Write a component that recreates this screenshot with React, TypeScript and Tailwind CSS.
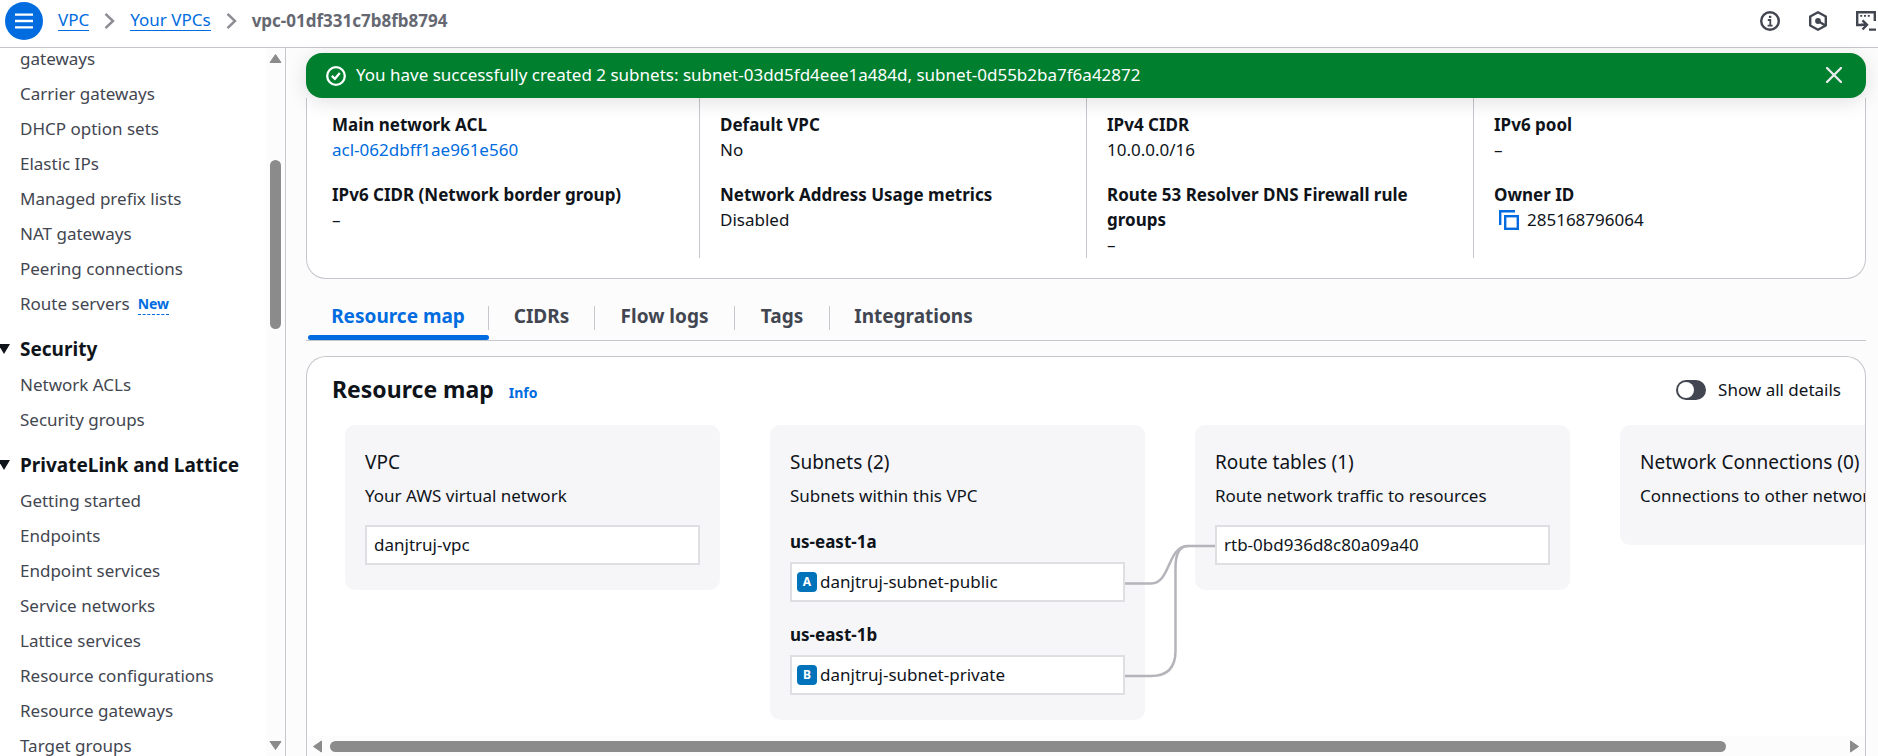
import type { ReactNode } from "react";

const firstLinks = [
  "gateways",
  "Carrier gateways",
  "DHCP option sets",
  "Elastic IPs",
  "Managed prefix lists",
  "NAT gateways",
  "Peering connections",
  "Route servers",
];
const securityLinks = ["Network ACLs", "Security groups"];
const latticeLinks = [
  "Getting started",
  "Endpoints",
  "Endpoint services",
  "Service networks",
  "Lattice services",
  "Resource configurations",
  "Resource gateways",
  "Target groups",
];

function NavLinks({ items }: { items: string[] }) {
  return (
    <ul>
      {items.map((item) => (
        <li key={item} className="flex h-[35px] items-center gap-2 pl-5 text-[#424650]">
          <a href="#nav">{item}</a>
          {item === "Route servers" && (
            <a href="#new" className="mt-0.5 border-b border-dashed border-[#006ce0] text-sm leading-5 font-bold text-[#006ce0]">
              New
            </a>
          )}
        </li>
      ))}
    </ul>
  );
}

function NavHeading({ children }: { children: ReactNode }) {
  return (
    <button type="button" className="flex h-[46px] w-full items-center pt-2.5 text-left text-[19px] font-bold">
      <svg width="20" height="12" viewBox="0 0 20 12" className="shrink-0" aria-hidden="true">
        <path d="M-2 1H10L4 11Z" fill="#0f141a" />
      </svg>
      {children}
    </button>
  );
}

function Chevron() {
  return (
    <svg width="11" height="18" viewBox="0 0 11 18" fill="none" stroke="#8c8c94" strokeWidth="2.5" aria-hidden="true">
      <path d="M1.5 1.8L9 9L1.5 16.2" />
    </svg>
  );
}

function Field({ label, children }: { label: string; children: ReactNode }) {
  return (
    <div>
      <dt className="font-bold">{label}</dt>
      <dd>{children}</dd>
    </div>
  );
}

function Column({ children }: { children: ReactNode }) {
  return <dl className="flex flex-col gap-5 pt-3.5 pb-px">{children}</dl>;
}

const dividedColumn = "-ml-5 border-l border-[#c6c6cd] pl-5";

function Panel({ title, text, children }: { title: string; text: string; children?: ReactNode }) {
  return (
    <section className="w-[375px] shrink-0 rounded-[10px] bg-[#f6f6f9] px-5 py-[25px]">
      <h3 className="text-[19px] leading-[25px]">{title}</h3>
      <p className="mt-2 pb-0.5 whitespace-nowrap">{text}</p>
      {children}
    </section>
  );
}

function Node({ name, badge }: { name: string; badge?: string }) {
  return (
    <div className="flex h-10 items-center gap-[3px] border-2 border-[#dedee3] bg-white px-[5px]">
      {badge ? (
        <span className="flex size-5 items-center justify-center rounded-sm bg-[#0073bb] text-xs font-bold text-white">
          {badge}
        </span>
      ) : null}
      <span className={badge ? "pb-0.5" : "pb-0.5 pl-0.5"}>{name}</span>
    </div>
  );
}

export default function App() {
  return (
    <div className="flex h-screen flex-col overflow-hidden bg-[#fcfcfd] font-['Noto_Sans',sans-serif] text-[17px] leading-[25px] text-[#0f141a]">
      <header className="flex h-12 shrink-0 items-center justify-between border-b border-[#c6c6cd] bg-white pb-[5px]">
        <div className="flex items-center">
          <button type="button" aria-label="Menu" className="ml-[5px] flex size-[38px] items-center justify-center rounded-full bg-[#006ce0]">
            <svg width="18" height="16" viewBox="0 0 18 16" stroke="#fff" strokeWidth="2.4" aria-hidden="true">
              <path d="M0 1.6H18M0 8H18M0 14.4H18" />
            </svg>
          </button>
          <nav aria-label="Breadcrumb" className="ml-[15px] flex items-center gap-[15px] pb-px">
            <a href="#vpc" className="border-b border-[#006ce0] leading-5 text-[#006ce0]">VPC</a>
            <Chevron />
            <a href="#vpcs" className="border-b border-[#006ce0] leading-5 text-[#006ce0]">Your VPCs</a>
            <Chevron />
            <span className="pb-px font-bold text-[#656871]">vpc-01df331c7b8fb8794</span>
          </nav>
        </div>
        <div className="flex items-center gap-7 pr-0.5 text-[#424650]">
          <button type="button" aria-label="Info">
            <svg width="20" height="20" viewBox="0 0 20 20" fill="none" stroke="currentColor" strokeWidth="2.4">
              <circle cx="10" cy="10" r="8.8" />
              <path d="M7.8 9H10.3V14.8M7.6 14.6H12.6" strokeWidth="1.8" />
              <path d="M10.1 4.8V7" />
            </svg>
          </button>
          <button type="button" aria-label="Diagnostics">
            <svg width="20" height="20" viewBox="0 0 20 20" fill="none" stroke="currentColor" strokeWidth="2.4" strokeLinejoin="round">
              <path d="M10 1.3L17.8 5.5V14.5L10 18.7L2.2 14.5V5.5Z" />
              <circle cx="10" cy="10" r="2.9" fill="currentColor" stroke="none" />
              <path d="M10 10L17 14.2" />
            </svg>
          </button>
          <button type="button" aria-label="CloudShell">
            <svg width="20" height="20" viewBox="0 0 20 20" fill="none" stroke="currentColor" strokeWidth="2.4">
              <path d="M6 14H1.2V1.2H18.8V10" />
              <path d="M4.2 4.9H6.2M8 4.9H10M11.8 4.9H13.8" strokeWidth="1.9" />
              <path d="M5 13.8H11M6.5 9.3L11 13.8L6.5 18.3M13 18.6H20" />
            </svg>
          </button>
        </div>
      </header>

      <div className="flex min-h-0 flex-1">
        <aside className="flex w-[286px] shrink-0 border-r border-[#c6c6cd] bg-white">
          <nav aria-label="VPC sections" className="min-w-0 flex-1 overflow-hidden">
            <div className="-mt-[7px]">
              <NavLinks items={firstLinks} />
              <NavHeading>Security</NavHeading>
              <NavLinks items={securityLinks} />
              <NavHeading>PrivateLink and Lattice</NavHeading>
              <NavLinks items={latticeLinks} />
            </div>
          </nav>
          <div className="flex w-[19px] flex-col items-center bg-[#fcfcfc] pt-1.5 pb-1.5" aria-hidden="true">
            <svg width="13" height="9" viewBox="0 0 13 9"><path d="M6.5 0.5L12 8.5H1Z" fill="#8b8b8b" stroke="#8b8b8b" strokeLinejoin="round" /></svg>
            <div className="flex min-h-0 flex-1 flex-col">
              <div className="basis-[97px]" />
              <div className="w-[11px] basis-[169px] rounded-full bg-[#8b8b8b]" />
            </div>
            <svg width="13" height="9" viewBox="0 0 13 9"><path d="M6.5 8.5L12 0.5H1Z" fill="#8b8b8b" stroke="#8b8b8b" strokeLinejoin="round" /></svg>
          </div>
        </aside>

        <main className="flex min-w-0 flex-1 flex-col pt-[5px] pr-3 pl-5">
          <div role="status" className="z-10 flex h-[45px] shrink-0 items-center gap-2.5 rounded-2xl bg-[#00802f] pr-6 pl-5 text-white shadow-[0_4px_20px_rgba(0,7,22,0.12)]">
            <svg width="20" height="20" viewBox="0 0 20 20" fill="none" stroke="currentColor" strokeWidth="2.3" aria-hidden="true">
              <circle cx="10" cy="10" r="8.8" />
              <path d="M5.8 9.8L8.9 12.8L13.8 7" />
            </svg>
            <p className="flex-1 truncate pb-0.5">
              You have successfully created 2 subnets: subnet-03dd5fd4eee1a484d, subnet-0d55b2ba7f6a42872
            </p>
            <button type="button" aria-label="Dismiss" className="pb-0.5">
              <svg width="16" height="16" viewBox="0 0 16 16" stroke="#ebebf0" strokeWidth="2.3" strokeLinecap="round">
                <path d="M1 1L15 15M15 1L1 15" />
              </svg>
            </button>
          </div>

          <section className="grid shrink-0 grid-cols-4 gap-10 rounded-b-[20px] border border-t-0 border-[#c6c6cd] bg-white px-[25px] pb-5">
            <Column>
              <Field label="Main network ACL">
                <a href="#acl" className="text-[#006ce0]">acl-062dbff1ae961e560</a>
              </Field>
              <Field label="IPv6 CIDR (Network border group)">–</Field>
            </Column>
            <div className={dividedColumn}>
              <Column>
                <Field label="Default VPC">No</Field>
                <Field label="Network Address Usage metrics">Disabled</Field>
              </Column>
            </div>
            <div className={dividedColumn}>
              <Column>
                <Field label="IPv4 CIDR">10.0.0.0/16</Field>
                <Field label="Route 53 Resolver DNS Firewall rule groups">–</Field>
              </Column>
            </div>
            <div className={dividedColumn}>
              <Column>
                <Field label="IPv6 pool">–</Field>
                <Field label="Owner ID">
                  <span className="flex items-center gap-2 pl-[5px]">
                    <button type="button" aria-label="Copy owner ID">
                      <svg width="20" height="20" viewBox="0 0 20 20" fill="none" stroke="#006ce0" strokeWidth="2.4">
                        <path d="M1.2 15V1.2H16" />
                        <rect x="6.2" y="6.2" width="12.6" height="12.6" />
                      </svg>
                    </button>
                    285168796064
                  </span>
                </Field>
              </Column>
            </div>
          </section>

          <div role="tablist" className="mt-4 flex h-[46px] shrink-0 items-stretch border-b border-[#c6c6cd] pl-0.5 text-[19px] font-bold text-[#424650]">
            <button type="button" role="tab" aria-selected="true" className="relative w-[181px] text-[#006ce0] after:absolute after:inset-x-0 after:bottom-0 after:h-[5px] after:rounded-full after:bg-[#006ce0]">
              <span className="flex h-6 items-center justify-center border-r border-[#c6c6cd] pb-0.5">Resource map</span>
            </button>
            <button type="button" role="tab" className="w-[106px]">
              <span className="flex h-6 items-center justify-center border-r border-[#c6c6cd] pb-0.5">CIDRs</span>
            </button>
            <button type="button" role="tab" className="w-[140px]">
              <span className="flex h-6 items-center justify-center border-r border-[#c6c6cd] pb-0.5">Flow logs</span>
            </button>
            <button type="button" role="tab" className="w-[95px]">
              <span className="flex h-6 items-center justify-center border-r border-[#c6c6cd] pb-0.5">Tags</span>
            </button>
            <button type="button" role="tab" className="w-[167px]">
              <span className="flex h-6 items-center justify-center pb-0.5">Integrations</span>
            </button>
          </div>

          <section className="mt-[15px] flex min-h-0 flex-1 flex-col rounded-t-[20px] border border-b-0 border-[#c6c6cd] bg-white">
            <div className="flex h-[68px] shrink-0 items-center justify-between pr-6 pb-[3px] pl-[25px]">
              <div className="flex items-baseline gap-[15px]">
                <h2 className="text-[23px] font-bold">Resource map</h2>
                <a href="#info" className="text-sm font-bold text-[#006ce0]">Info</a>
              </div>
              <label className="flex items-center gap-3">
                <input type="checkbox" role="switch" className="peer sr-only" />
                <span className="flex h-5 w-[30px] items-center rounded-full bg-[#424650] p-0.5 peer-checked:justify-end peer-checked:bg-[#006ce0]">
                  <span className="size-4 rounded-full bg-white" />
                </span>
                Show all details
              </label>
            </div>
            <div className="relative flex min-h-0 flex-1 items-start gap-[50px] overflow-hidden pl-[38px]">
              <Panel title="VPC" text="Your AWS virtual network">
                <div className="mt-[15px]">
                  <Node name="danjtruj-vpc" />
                </div>
              </Panel>
              <Panel title="Subnets (2)" text="Subnets within this VPC">
                <div className="mt-5 flex flex-col gap-[21px]">
                  <div>
                    <h4 className="h-8 leading-6 font-bold">us-east-1a</h4>
                    <Node badge="A" name="danjtruj-subnet-public" />
                  </div>
                  <div>
                    <h4 className="h-8 leading-6 font-bold">us-east-1b</h4>
                    <Node badge="B" name="danjtruj-subnet-private" />
                  </div>
                </div>
              </Panel>
              <Panel title="Route tables (1)" text="Route network traffic to resources">
                <div className="mt-[15px]">
                  <Node name="rtb-0bd936d8c80a09a40" />
                </div>
              </Panel>
              <Panel title="Network Connections (0)" text="Connections to other networks">
                <div className="h-2.5" />
              </Panel>
              <svg width="90" height="140" viewBox="0 0 90 140" fill="none" stroke="#b4b4bb" strokeWidth="2.5" className="absolute top-[115px] left-[818px]" aria-hidden="true">
                <path d="M0 43.5H26C46 43.5 42 6 63 6H90" />
                <path d="M0 136H26Q50.5 136 50.5 111V28Q50.5 6 63 6" />
              </svg>
            </div>
            <div className="flex h-5 shrink-0 items-center bg-[#fcfcfc] pr-1.5 pl-1.5" aria-hidden="true">
              <svg width="9" height="13" viewBox="0 0 9 13"><path d="M0.5 6.5L8.5 1V12Z" fill="#8b8b8b" stroke="#8b8b8b" strokeLinejoin="round" /></svg>
              <div className="mx-2 flex flex-1">
                <div className="h-[11px] flex-[12] rounded-full bg-[#8b8b8b]" />
                <div className="flex-[1]" />
              </div>
              <svg width="9" height="13" viewBox="0 0 9 13"><path d="M8.5 6.5L0.5 1V12Z" fill="#8b8b8b" stroke="#8b8b8b" strokeLinejoin="round" /></svg>
            </div>
          </section>
        </main>
      </div>
    </div>
  );
}
